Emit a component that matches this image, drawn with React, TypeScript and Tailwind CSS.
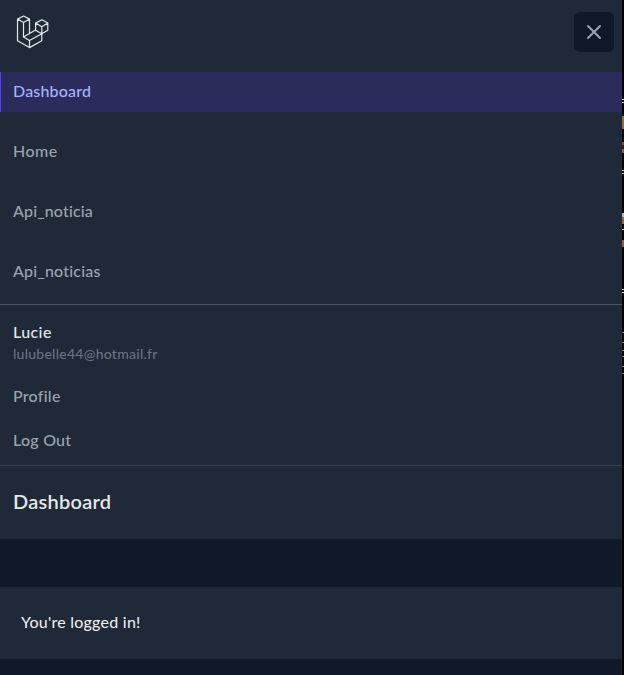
type MenuLink = { label: string; tracking: string };

const links: MenuLink[] = [
  { label: "Home", tracking: "tracking-[0.45px]" },
  { label: "Api_noticia", tracking: "tracking-[0.15px]" },
  { label: "Api_noticias", tracking: "tracking-[0.2px]" },
];

// Slivers of the window that sits behind the page's right edge.
const slivers = [
  { top: 99, height: 1, color: "bg-[#d0d0d0]" },
  { top: 102, height: 1, color: "bg-[#d0d0d0]" },
  { top: 116, height: 13, color: "bg-[#a8623c]" },
  { top: 142, height: 3, color: "bg-[#7d4a38]" },
  { top: 145, height: 4, color: "bg-[#3a1c18]" },
  { top: 149, height: 4, color: "bg-[#8d5848]" },
  { top: 170, height: 1, color: "bg-[#d0d0d0]" },
  { top: 173, height: 1, color: "bg-[#d0d0d0]" },
  { top: 213, height: 4, color: "bg-[#a9bccb]" },
  { top: 217, height: 7, color: "bg-[#8f6a42]" },
  { top: 229, height: 1, color: "bg-[#d0d0d0]" },
  { top: 240, height: 7, color: "bg-[#8d5848]" },
  { top: 289, height: 1, color: "bg-[#d0d0d0]" },
  { top: 292, height: 1, color: "bg-[#d0d0d0]" },
  { top: 332, height: 1, color: "bg-[#a87850]" },
  { top: 342, height: 1, color: "bg-[#a87850]" },
  { top: 350, height: 1, color: "bg-[#c07820]" },
  { top: 356, height: 1, color: "bg-[#a87850]" },
  { top: 366, height: 1, color: "bg-[#a87850]" },
  { top: 373, height: 1, color: "bg-[#c07820]" },
];

function Logo() {
  return (
    <svg className="h-9 w-9" viewBox="0 0.4 36 36" fill="none" stroke="#e5e7eb" strokeWidth="1.2" strokeLinejoin="round" strokeLinecap="round">
      <path d="M4.5 5.5 10.5 2.4 16.5 5.5 10.5 9ZM4.5 5.5V27.2L16.5 34 28.8 27.2V20.1M10.5 9V23.5L16.5 27V34M16.5 5.5V20.1M10.5 23.5 22.6 16.4M16.5 27 28.8 20.1" />
      <path d="M22.6 9.5 28.8 6.1 34.8 9.5 28.8 13.1ZM22.6 9.5V16.6L28.8 20.1 34.8 16.6V9.5M28.8 13.1V20.1" />
    </svg>
  );
}

export default function App() {
  return (
    <div className="relative flex h-[675px] w-[624px] overflow-hidden bg-black font-['Lato',sans-serif] font-medium">
      <div className="flex w-[622px] flex-col bg-[#111827]">
        <nav className="border-b border-[#374151] bg-[#1f2937]">
          <div className="flex h-16 items-center justify-between pr-2 pl-[13px]">
            <Logo />
            <button aria-label="Close menu" className="flex size-10 items-center justify-center rounded-md bg-[#111827] text-[#9ca3af]">
              <svg className="size-6" viewBox="0 0 24 24" fill="none" stroke="currentColor" strokeWidth="2" strokeLinecap="round">
                <path d="M6 18 18 6M6 6l12 12" />
              </svg>
            </button>
          </div>
          <div className="pt-2">
            <a className="flex h-10 items-center border-l border-[#4f46e5] bg-[#2b2b5c] pb-0.5 pl-3 text-base tracking-[0.17px] text-[#a5b4fc]">Dashboard</a>
            {links.map((l) => (
              <a key={l.label} className={`mt-5 flex h-10 items-center pb-0.5 pl-[13px] text-base text-[#9ca3af] ${l.tracking}`}>{l.label}</a>
            ))}
          </div>
          <div className="mt-3 border-t border-[#4b5563] pt-[15px] pb-1">
            <div className="pl-[13px]">
              <div className="text-base tracking-[0.4px] text-[#e5e7eb]">Lucie</div>
              <div className="text-sm leading-5 tracking-[0.25px] text-[#6b7280]">lulubelle44@hotmail.fr</div>
            </div>
            <div className="mt-[13px] flex flex-col gap-1 pl-[13px] text-base tracking-[0.25px] text-[#9ca3af]">
              <a className="flex h-10 items-center pb-0.5">Profile</a>
              <a className="flex h-10 items-center pb-0.5">Log Out</a>
            </div>
          </div>
        </nav>
        <header className="h-[73px] bg-[#1f2937] pt-[23px] pl-[13px]">
          <h2 className="text-xl leading-[25px] font-semibold tracking-[0.25px] text-[#e5e7eb]">Dashboard</h2>
        </header>
        <main className="pt-12">
          <div className="flex h-[72px] items-center bg-[#1f2937] pb-0.5 pl-[21px] text-base font-normal tracking-[0.25px] text-[#f3f4f6]">You're logged in!</div>
        </main>
      </div>
      {slivers.map((s) => (
        <span key={s.top} className={`absolute right-0 w-0.5 ${s.color}`} style={{ top: s.top, height: s.height }} />
      ))}
    </div>
  );
}
